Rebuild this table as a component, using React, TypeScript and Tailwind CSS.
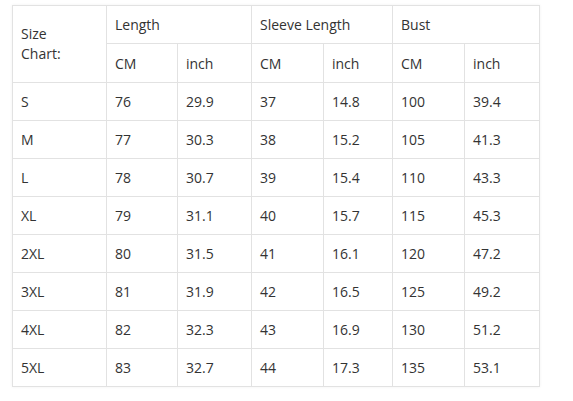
const rows: string[][] = [
  ["S", "76", "29.9", "37", "14.8", "100", "39.4"],
  ["M", "77", "30.3", "38", "15.2", "105", "41.3"],
  ["L", "78", "30.7", "39", "15.4", "110", "43.3"],
  ["XL", "79", "31.1", "40", "15.7", "115", "45.3"],
  ["2XL", "80", "31.5", "41", "16.1", "120", "47.2"],
  ["3XL", "81", "31.9", "42", "16.5", "125", "49.2"],
  ["4XL", "82", "32.3", "43", "16.9", "130", "51.2"],
  ["5XL", "83", "32.7", "44", "17.3", "135", "53.1"],
];

const cell = "border border-[#e2e2e2] px-2 align-middle text-left font-normal";

export default function App() {
  return (
    <div className="w-[573px] h-[401px] bg-white pt-[5px] pl-[12px] text-[14px] text-[#333] font-['Open_Sans',Arial,sans-serif]">
      <table className="table-fixed border-collapse w-[527px] shadow-[0_0_3px_rgba(0,0,0,0.06)]">
        <colgroup>
          <col className="w-[94px]" />
          <col className="w-[71px]" />
          <col className="w-[74px]" />
          <col className="w-[72px]" />
          <col className="w-[69px]" />
          <col className="w-[72px]" />
          <col className="w-[75px]" />
        </colgroup>
        <thead>
          <tr className="h-[38px]">
            <th rowSpan={2} className={`${cell} leading-[20px]`}>
              Size
              <br />
              Chart:
            </th>
            <th colSpan={2} className={cell}>Length</th>
            <th colSpan={2} className={cell}>Sleeve Length</th>
            <th colSpan={2} className={cell}>Bust</th>
          </tr>
          <tr className="h-[39px]">
            <th className={cell}>CM</th>
            <th className={cell}>inch</th>
            <th className={cell}>CM</th>
            <th className={cell}>inch</th>
            <th className={cell}>CM</th>
            <th className={cell}>inch</th>
          </tr>
        </thead>
        <tbody>
          {rows.map((r) => (
            <tr key={r[0]} className="h-[38px]">
              {r.map((v, i) => (
                <td key={i} className={cell}>{v}</td>
              ))}
            </tr>
          ))}
        </tbody>
      </table>
    </div>
  );
}
